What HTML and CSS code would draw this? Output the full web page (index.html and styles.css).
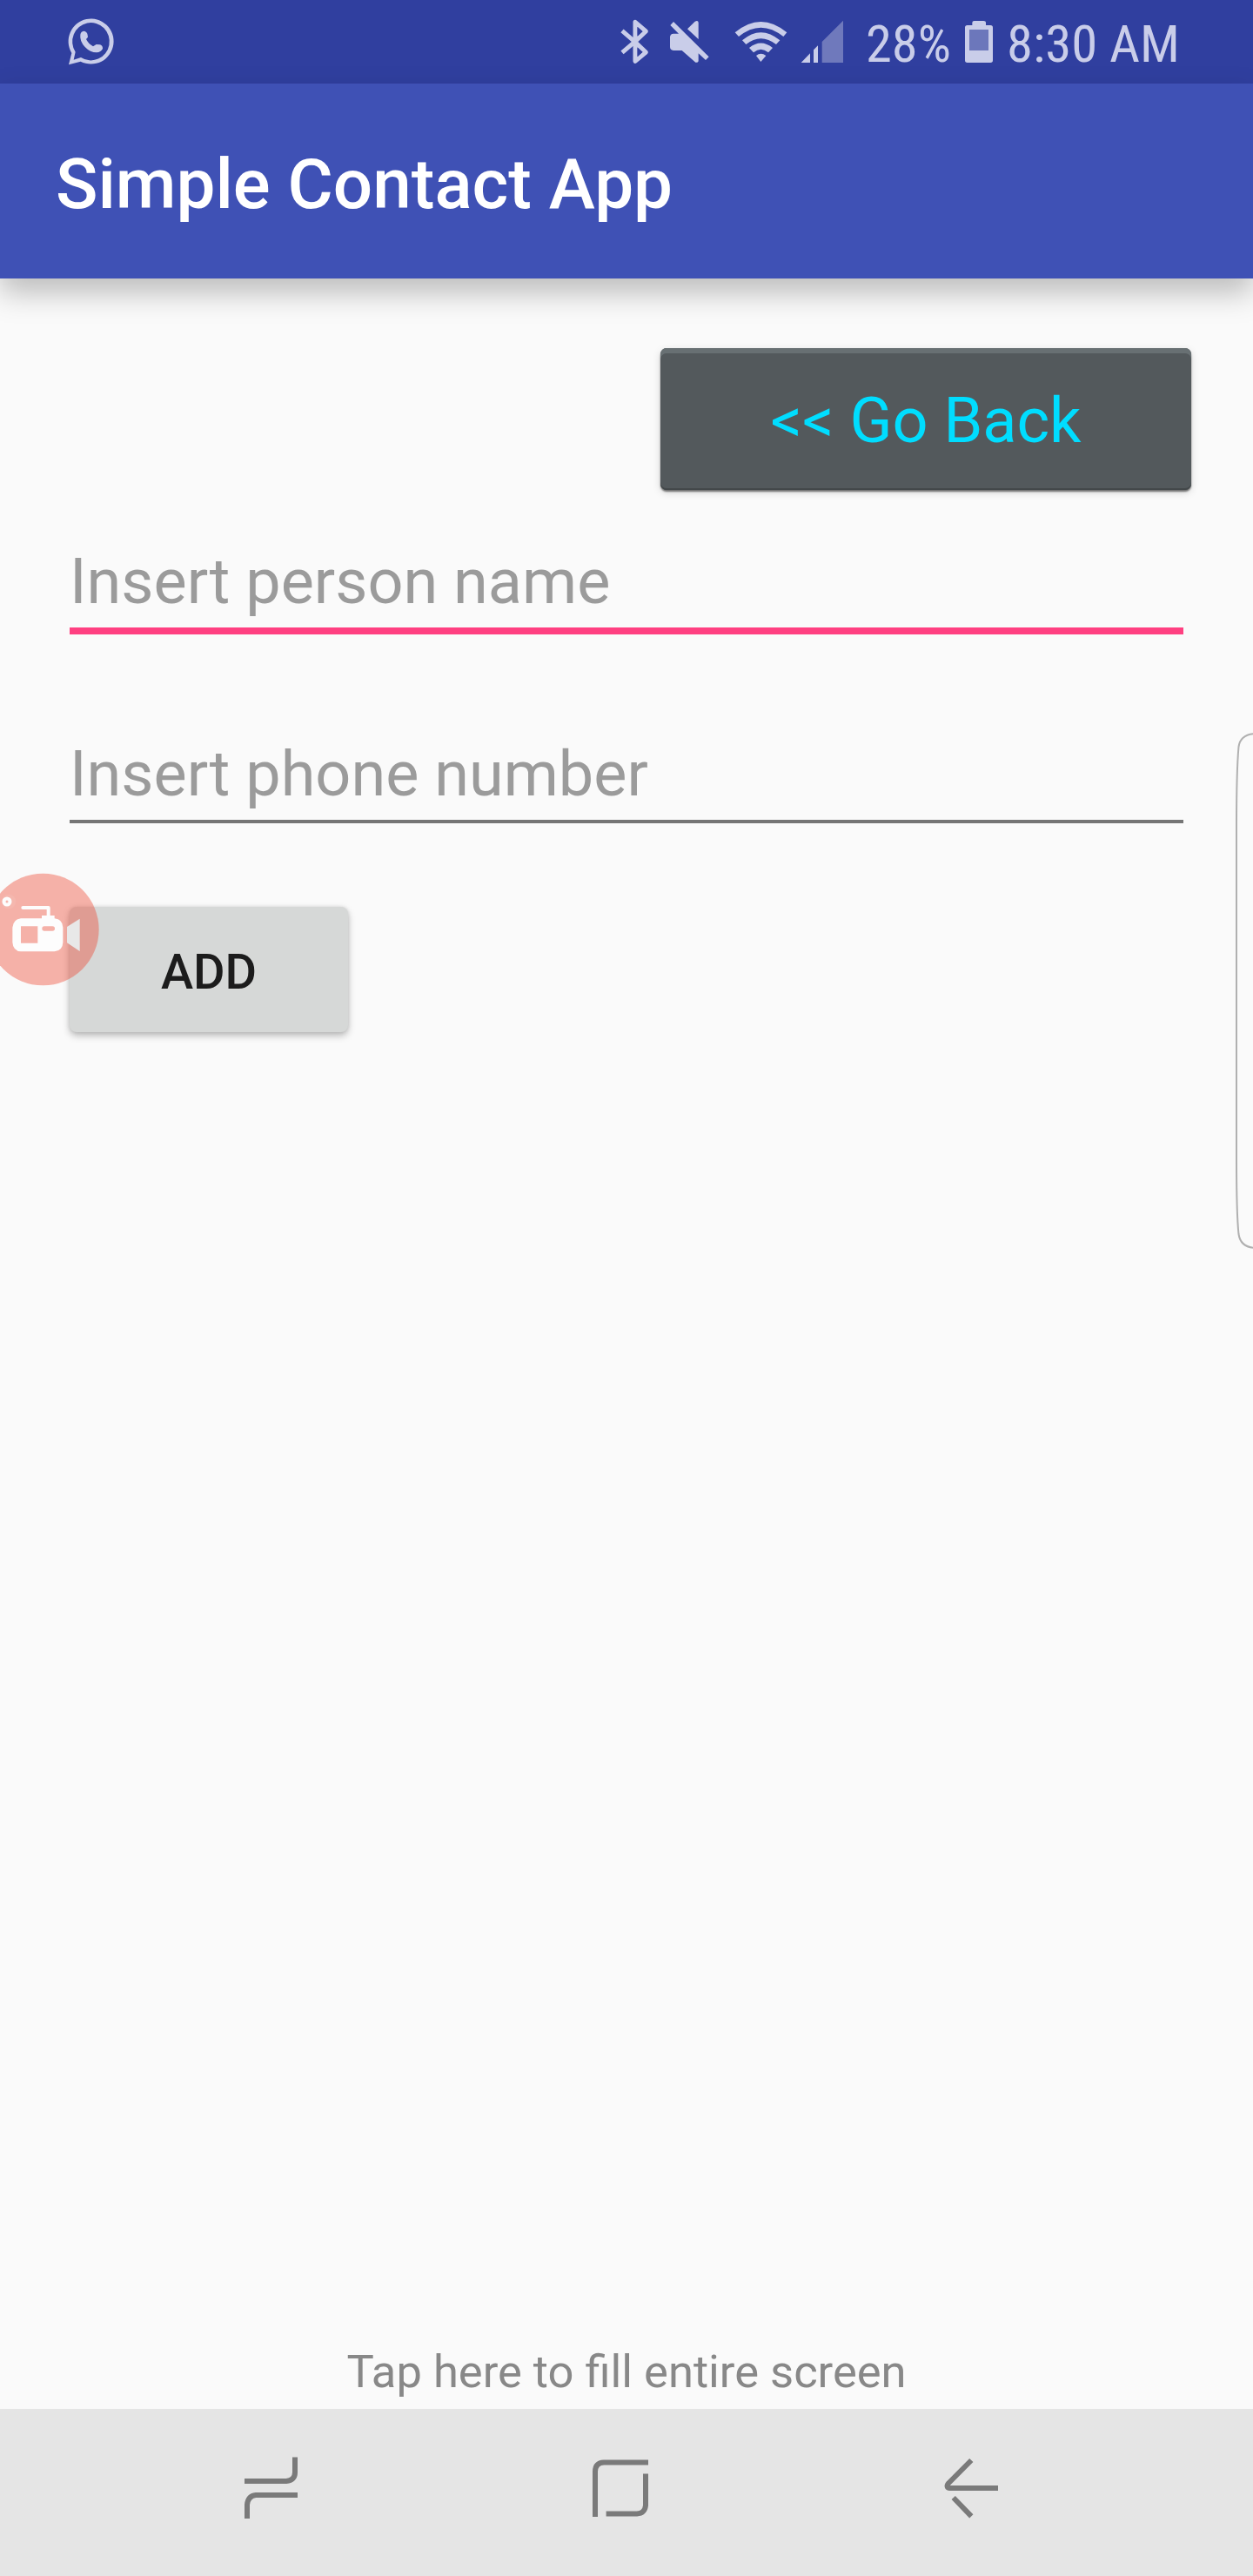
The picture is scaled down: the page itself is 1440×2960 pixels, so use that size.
FILE: index.html
```html
<!DOCTYPE html>
<html lang="en">
<head>
<meta charset="utf-8">
<title>Simple Contact App</title>
<link rel="stylesheet" href="styles.css">
</head>
<body>
<div class="screen">
  <div class="status-bar">
    <svg class="messenger" width="100" height="96" viewBox="0 0 300 288">
      <path fill-rule="evenodd" d="M57 223L67 183A78 78 0 1 1 98 212ZM74 206L99 198A64 65 0 1 0 80 179Z"/>
      <path d="M97 119Q99 107 111 107Q121 110 122 121L123 128L117 135Q124 150 141 160L152 153L165 154Q175 158 174 168Q168 180 153 181Q131 181 113 162Q94 141 97 119Z"/>
    </svg>
    <svg class="bluetooth" width="40" height="96" viewBox="30 0 120 288">
      <path d="M45 106L90 145L127 180L90 211V76L127 108L90 143L45 181" fill="none" stroke="#c9cde9" stroke-width="15" stroke-linejoin="round"/>
      <path d="M98 93L115 108L98 124ZM98 165L115 179L98 196Z" fill="#303f9f"/>
    </svg>
    <svg class="mute" width="55" height="96" viewBox="195 0 165 288">
      <path d="M222 75L344 196L333 207L308 184V211Q306 217 298 215L251 174H222Q210 172 210 162V127Q211 117 222 116H240L211 87Z"/>
      <path d="M270 100L296 74Q307 68 308 78V135Z"/>
    </svg>
    <svg class="wifi" width="70" height="96" viewBox="420 0 210 288">
      <path d="M434 112Q523 38 613 112L601 126Q523 64 447 126Z"/>
      <path d="M459 139Q523 84 589 139L576 153Q523 112 472 153Z"/>
      <path d="M483 165Q523 132 564 165L549 181Q523 160 498 181Z"/>
      <path d="M507 192Q523 179 541 192L523 213Z"/>
    </svg>
    <svg class="signal" width="60" height="96" viewBox="645 0 180 288">
      <path d="M662 216L693 184V216ZM705 172L720 157V216H705Z"/>
      <path d="M734 144L807 71V216H734Z" fill="#6f79bc"/>
    </svg>
    <svg class="percent" width="110" height="96">
      <text x="5" y="71" textLength="98" lengthAdjust="spacingAndGlyphs">28%</text>
    </svg>
    <svg class="battery" width="40" height="96" viewBox="375 0 120 288">
      <path d="M412 87V78Q412 72 419 72H451Q459 72 459 79V87H475Q483 87 483 95V208Q483 216 475 216H395Q387 216 387 208V95Q387 87 395 87Z"/>
      <path d="M402 102H468V174H402Z" fill="#6c77bb"/>
    </svg>
    <svg class="clock" width="205" height="96">
      <text x="2" y="71" textLength="199" lengthAdjust="spacingAndGlyphs">8:30 AM</text>
    </svg>
  </div>

  <header class="app-bar"><h1>Simple Contact App</h1></header>

  <main class="content">
    <button class="go-back" type="button">&lt;&lt; Go Back</button>
    <div class="field field-active">Insert person name</div>
    <div class="field">Insert phone number</div>
    <button class="add" type="button">ADD</button>
    <div class="fill-hint">Tap here to fill entire screen</div>
  </main>

  <nav class="nav-bar">
    <svg class="recents" width="80" height="80"><path d="M9 32H57Q67 31 67 22V4.500M12 75V59Q13 49 22 48H70"/></svg>
    <svg class="home" width="80" height="80"><path d="M11 73V21Q11 11 21 10.500H72M69 23.500V60Q68 69 59 69.500H23.600"/></svg>
    <svg class="back" width="80" height="80"><path d="M40.300 8L14 34.500C11.500 37.500 12.500 40 15.500 40H71M19.700 51L40.300 72.300"/></svg>
  </nav>

  <svg class="recorder" width="120" height="136" viewBox="0 60 360 408">
    <circle cx="148" cy="264" r="193" fill="#ee432e" fill-opacity=".4"/>
    <circle cx="30" cy="168" r="25" fill="#fff" fill-opacity=".08"/>
    <circle cx="24" cy="168" r="10.500" fill="none" stroke="#fdfdfd" stroke-width="12"/>
    <path d="M79 189H167V220" fill="none" stroke="#fdfdfd" stroke-width="12" stroke-linecap="round" stroke-linejoin="round"/>
    <path fill="#fdfdfd" fill-rule="evenodd" d="M144 216H188V226Q216 229 217 257V308Q216 337 188 340H72Q45 338 43 308V257Q46 229 72 226H144ZM72 253V311H130V253ZM153 253A8 8 0 0 0 153 269H181A8 8 0 0 0 181 253Z"/>
    <path fill="#e8e8e8" d="M231 255L275 227V339L231 310Z"/>
  </svg>

  <svg class="edge-handle" width="24" height="600">
    <path d="M24 3C12 3 5 8 3.500 18C1.500 40 1 70 1 110V490C1 530 1.500 560 3.500 578C5 588 12 594 24 594"/>
  </svg>
</div>
</body>
</html>
```

FILE: styles.css
```css
* {
  box-sizing: border-box;
}

body {
  margin: 0;
  background: #fafafa;
  font-family: Roboto, "Liberation Sans", sans-serif;
}

svg {
  display: block;
  flex: none;
}

.screen {
  position: relative;
  display: flex;
  flex-direction: column;
  width: 1440px;
  height: 2960px;
  overflow: hidden;
}

.status-bar {
  display: flex;
  height: 96px;
  padding: 0 80px 0 60px;
  background: #303f9f;
  fill: #c9cde9;
  font-family: "Roboto Condensed", Roboto, sans-serif;
  font-size: 60px;
}

.messenger { margin-right: auto; }
.mute { margin-left: 15px; }
.wifi { margin-left: 20px; }
.signal { margin-left: 5px; }
.percent { margin-left: 15px; }
.battery { margin-left: 5px; }
.clock { margin-left: 10px; }

.app-bar {
  z-index: 1;
  display: flex;
  align-items: center;
  height: 224px;
  padding: 7px 64px 0;
  background: #3f51b5;
  box-shadow: 0 16px 32px rgba(0, 0, 0, 0.25);
}

.app-bar h1 {
  margin: 0;
  color: #fff;
  font-size: 80px;
  font-weight: 500;
  white-space: nowrap;
}

.content {
  display: flex;
  flex: 1;
  flex-direction: column;
  padding: 80px 80px 0;
}

button {
  border: 0;
  font-family: inherit;
}

.go-back {
  align-self: flex-end;
  width: 610px;
  height: 163px;
  margin-right: -9px;
  padding: 4px 0 0;
  border-radius: 7px;
  background: #53595c;
  box-shadow: inset 0 6px #687073, inset 0 -2px #43484a, 0 2px 2px rgba(0, 0, 0, 0.5), 0 3px 10px rgba(0, 0, 0, 0.15);
  color: #00ddff;
  font-size: 72px;
}

.field {
  margin-top: 108px;
  border-bottom: 4px solid #757575;
  color: #9b9b9b;
  font-size: 72px;
  line-height: 105px;
}

.field-active {
  margin-top: 53px;
  border-bottom: 8px solid #ff4081;
}

.add {
  width: 320px;
  height: 144px;
  margin-top: 96px;
  padding: 6px 0 0;
  border-radius: 8px;
  background: #d6d8d7;
  box-shadow: 0 4px 8px rgba(0, 0, 0, 0.26), 0 0 4px rgba(0, 0, 0, 0.1);
  color: #1c1c1c;
  font-size: 56px;
  font-weight: 500;
}

.fill-hint {
  margin-top: auto;
  color: #888;
  font-size: 52.5px;
  line-height: 86px;
  text-align: center;
}

.nav-bar {
  display: flex;
  height: 192px;
  padding: 51px 0 0 272px;
  background: #e5e5e5;
  fill: none;
  stroke: #7a7a7a;
  stroke-width: 6;
}

.home { margin-left: 321px; }
.back { margin-left: 323px; }

.recorder {
  position: absolute;
  top: 1000px;
  left: 0;
}

.edge-handle {
  position: absolute;
  top: 840px;
  right: -4px;
  fill: none;
  stroke: #b0b0b0;
  stroke-width: 2;
}
```
